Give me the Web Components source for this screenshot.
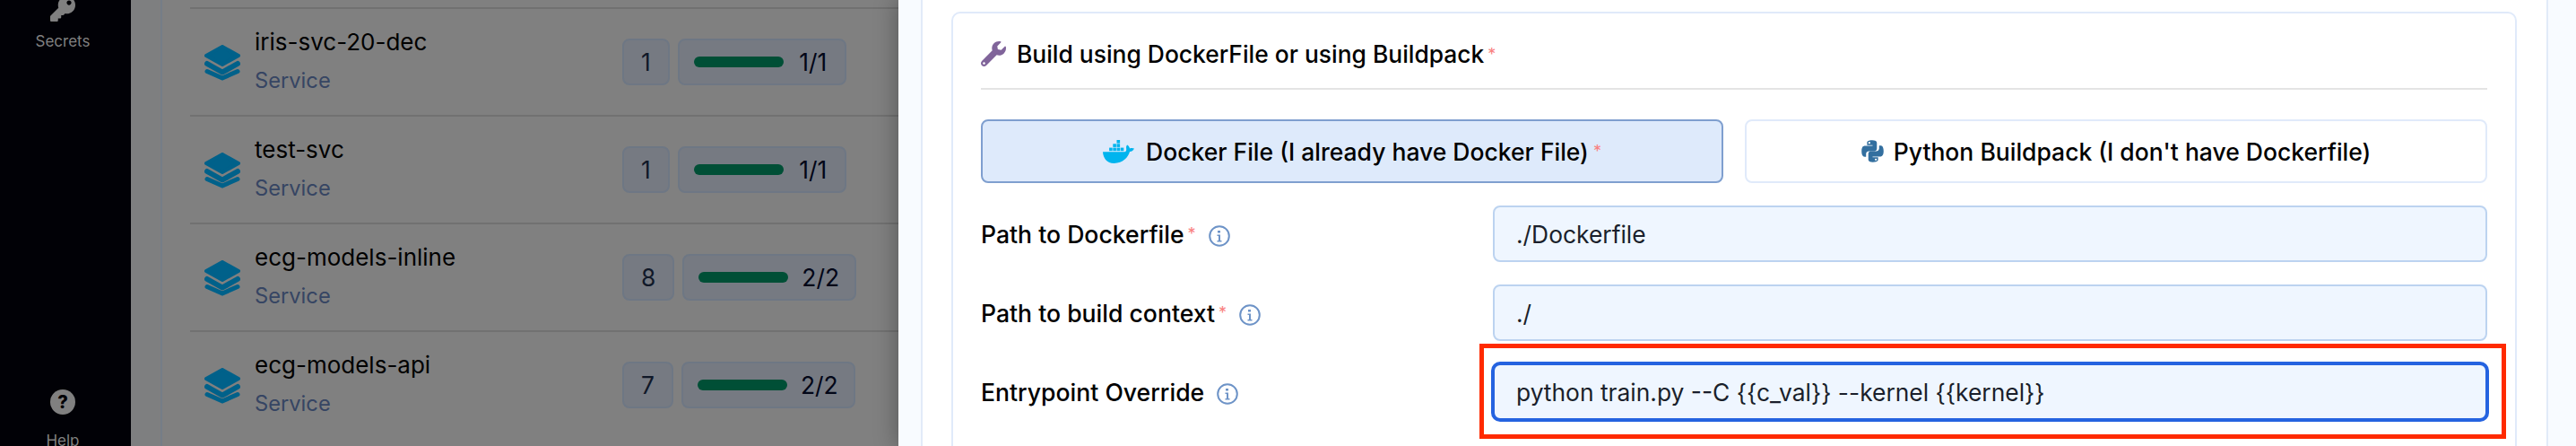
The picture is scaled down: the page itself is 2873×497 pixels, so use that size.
<!DOCTYPE html>
<html>
<head>
<meta charset="utf-8">
<style>
  html, body { margin: 0; height: 497px; overflow: hidden; background: #808080; }
  body { font-family: Inter, "Liberation Sans", sans-serif; }
</style>
</head>
<body>
<app-shell>
  <side-nav slot="nav"></side-nav>
  <service-list slot="list">
    <service-row name="iris-svc-20-dec" count="1" ready="1/1"></service-row>
    <service-row name="test-svc" count="1" ready="1/1"></service-row>
    <service-row name="ecg-models-inline" count="8" ready="2/2"></service-row>
    <service-row name="ecg-models-api" count="7" ready="2/2"></service-row>
  </service-list>
  <drawer-panel slot="drawer">
    <build-card>
      <option-tabs slot="tabs"></option-tabs>
      <form-row label="Path to Dockerfile" value="./Dockerfile" required></form-row>
      <form-row label="Path to build context" value="./" required></form-row>
      <form-row label="Entrypoint Override" value="python train.py --C {{c_val}} --kernel {{kernel}}" focused></form-row>
    </build-card>
  </drawer-panel>
</app-shell>

<script>
class AppShell extends HTMLElement {
  constructor() {
    super();
    this.attachShadow({ mode: "open" });
    this.shadowRoot.innerHTML = `
      <style>
        :host { display: flex; width: 2873px; height: 497px; overflow: hidden; }
        #main { position: relative; z-index: 0; display: flex; width: 856px; flex: none; background: #808080; }
        #strip { width: 33px; flex: none; background: #7e7f80; border-right: 2px solid #757d87; box-sizing: content-box; margin-right: -2px; }
      </style>
      <slot name="nav"></slot>
      <div id="main">
        <div id="strip"></div>
        <slot name="list"></slot>
      </div>
      <slot name="drawer"></slot>
    `;
  }
}

class SideNav extends HTMLElement {
  constructor() {
    super();
    this.attachShadow({ mode: "open" });
    this.shadowRoot.innerHTML = `
      <style>
        :host { display: flex; flex-direction: column; align-items: center; width: 146px; box-sizing: border-box; padding-right: 6px; flex: none; height: 497px; background: #010106; color: #808080; font-size: 17px; overflow: hidden; }
        .key { width: 28px; height: 28px; margin-top: -4px; fill: #808080; }
        .label { margin-top: 11px; line-height: 22px; }
        .help { width: 28px; height: 28px; border-radius: 50%; background: #808080; color: #010106; font-weight: 800; font-size: 20px; line-height: 28px; text-align: center; margin-top: auto; }
        .help + .label { margin-top: 18px; margin-bottom: -5px; }
      </style>
      <svg class="key" viewBox="0 0 512 512"><path d="M512 176.001C512 273.203 433.202 352 336 352c-11.22 0-22.19-1.062-32.827-3.069l-24.012 27.014A23.999 23.999 0 0 1 261.223 384H224v40c0 13.255-10.745 24-24 24h-40v40c0 13.255-10.745 24-24 24H24c-13.255 0-24-10.745-24-24v-78.059c0-6.365 2.529-12.47 7.029-16.971l161.802-161.802C163.108 213.814 160 195.271 160 176 160 78.798 238.797.001 335.999 0 433.488-.001 512 78.511 512 176.001zM336 128c0 26.51 21.49 48 48 48s48-21.49 48-48-21.49-48-48-48-48 21.49-48 48z"/></svg>
      <div class="label">Secrets</div>
      <div class="help">?</div>
      <div class="label">Help</div>
    `;
  }
}

class ServiceList extends HTMLElement {
  constructor() {
    super();
    this.attachShadow({ mode: "open" });
    this.shadowRoot.innerHTML = `
      <style>
        :host { display: block; flex: 1; padding: 8px 0 0 33px; }
      </style>
      <slot></slot>
    `;
  }
}

class ServiceRow extends HTMLElement {
  connectedCallback() {
    const name = this.getAttribute("name");
    const count = this.getAttribute("count");
    const ready = this.getAttribute("ready");
    this.attachShadow({ mode: "open" });
    this.shadowRoot.innerHTML = `
      <style>
        :host { display: flex; align-items: center; height: 120px; box-sizing: border-box; border-top: 2px solid #717171; padding-left: 16px; }
        svg { width: 40px; height: 40px; flex: none; margin-right: 16px; margin-top: 2px; }
        .text { width: 410px; flex: none; margin-top: -5px; }
        .name { font-size: 26px; line-height: 32px; color: #000; }
        .kind { font-size: 23.7px; line-height: 24px; color: #364563; margin-top: 15px; }
        .box { display: flex; align-items: center; height: 52px; box-sizing: border-box; background: #767a82; border: 2px solid #6e7784; border-radius: 8px; padding: 0 19px; font-size: 26.4px; color: #101828; margin-right: 9px; }
        .box.pods { padding: 0 17px 0 16px; }
        .bar { width: 100px; height: 12px; border-radius: 6px; background: #004f36; margin-right: 15px; }
        .ready { color: #020617; min-width: 36px; text-align: center; }
      </style>
      <svg viewBox="0 0 40 40">
        <path d="M20 2 L38 12 L20 22 L2 12 Z" fill="#00618a" stroke="#00618a" stroke-width="4" stroke-linejoin="round"/>
        <path d="M3 21 L20 30.5 L37 21" fill="none" stroke="#00618a" stroke-width="6" stroke-linecap="round" stroke-linejoin="round"/>
        <path d="M3 29.5 L20 37 L37 29.5" fill="none" stroke="#00618a" stroke-width="5" stroke-linecap="round" stroke-linejoin="round"/>
      </svg>
      <div class="text">
        <div class="name">${name}</div>
        <div class="kind">Service</div>
      </div>
      <div class="box">${count}</div>
      <div class="box pods"><div class="bar"></div><span class="ready">${ready}</span></div>
    `;
  }
}

class DrawerPanel extends HTMLElement {
  constructor() {
    super();
    this.attachShadow({ mode: "open" });
    this.shadowRoot.innerHTML = `
      <style>
        :host { display: block; position: relative; z-index: 1; flex: 1; background: #f8fbff; box-shadow: 0 0 24px 2px rgba(0,0,0,.3); padding: 0 31px 0 25px; min-width: 0; }
        #inner { background: #fff; height: 497px; box-sizing: border-box; border-left: 2px solid #e2ebf9; border-right: 2px solid #e2ebf9; padding: 13px 33px 0 32px; }
      </style>
      <div id="inner"><slot></slot></div>
    `;
  }
}

class BuildCard extends HTMLElement {
  constructor() {
    super();
    this.attachShadow({ mode: "open" });
    this.shadowRoot.innerHTML = `
      <style>
        :host { display: block; background: #fff; border: 2px solid #e0eafa; border-radius: 10px; padding: 30px 31px 40px; }
        h3 { display: flex; align-items: center; margin: 0; height: 30px; font-size: 26.4px; font-weight: 450; color: #000; font-family: inherit; }
        svg { width: 28px; height: 28px; fill: #80649a; margin-right: 12px; }
        .req { color: #f98080; font-size: 18px; font-weight: 400; margin-left: 4px; }
        hr { border: 0; height: 2px; background: #e4e4e4; margin: 23px 0 33px; }
        .fields { display: flex; flex-direction: column; gap: 25px; }
      </style>
      <h3>
        <svg viewBox="0 0 512 512"><path d="M507.73 109.1c-2.24-9.03-13.54-12.09-20.12-5.51l-74.36 74.36-67.88-11.31-11.31-67.88 74.36-74.36c6.62-6.62 3.43-17.9-5.66-20.16-47.38-11.74-99.55.91-136.58 37.93-39.64 39.64-50.55 97.1-34.05 147.2L18.74 402.76c-24.99 24.99-24.99 65.51 0 90.5 24.99 24.99 65.51 24.99 90.5 0l213.21-213.21c50.12 16.71 107.47 5.68 147.37-34.22 37.07-37.07 49.7-89.32 37.91-136.73zM64 472c-13.25 0-24-10.75-24-24 0-13.26 10.75-24 24-24s24 10.74 24 24c0 13.25-10.75 24-24 24z"/></svg>
        Build using DockerFile or using Buildpack<span class="req">*</span>
      </h3>
      <hr>
      <slot name="tabs"></slot>
      <div class="fields"><slot></slot></div>
    `;
  }
}

class OptionTabs extends HTMLElement {
  constructor() {
    super();
    this.attachShadow({ mode: "open" });
    this.shadowRoot.innerHTML = `
      <style>
        :host { display: grid; grid-template-columns: 1fr 1fr; gap: 24px; margin-bottom: 25px; }
        .opt { display: flex; align-items: center; justify-content: center; height: 71px; box-sizing: border-box; border: 2px solid #e0eafa; border-radius: 8px; background: #fff; font-size: 26.5px; font-weight: 450; color: #000; }
        .opt.on { background: #deeafb; border-color: #7f9fcf; }
        .whale { width: 35px; height: 26px; margin-right: 13px; }
        .py { width: 25px; height: 25px; margin-right: 11px; }
        .req { color: #f98080; font-size: 18px; font-weight: 400; margin-left: 5px; }
      </style>
      <div class="opt on">
        <svg class="whale" viewBox="0 0 35 26" fill="#00b4ee">
          <rect x="15.5" y="0" width="3.6" height="3.6"/>
          <rect x="11.3" y="4.3" width="3.6" height="3.6"/><rect x="15.5" y="4.3" width="3.6" height="3.6"/>
          <rect x="7.1" y="8.6" width="3.6" height="3.6"/><rect x="11.3" y="8.6" width="3.6" height="3.6"/><rect x="15.5" y="8.6" width="3.6" height="3.6"/><rect x="19.7" y="8.6" width="3.6" height="3.6"/>
          <path d="M0 13.2H24.5c1.5 0 2-2 1.6-4.2-.3-1.6.3-3 1.2-3.6 1.4 1 2.4 2.4 2.7 4 1.7-.7 3.6-.6 5 .2-.8 2-2.6 3.3-5 3.5C28 19.500 22.500 26 12.500 26 4.500 26 .3 20 0 13.200Z"/>
        </svg>
        Docker File (I already have Docker File)<span class="req">*</span>
      </div>
      <div class="opt">
        <svg class="py" viewBox="0 0 110 110" fill="#336f9f" fill-rule="evenodd">
          <path d="M54 1C26 1 28 13 28 13v12h27v4H17S1 27 1 55s14 27 14 27h8V69s0-14 14-14h26s13 0 13-13V15S78 1 54 1zM39 9a5 5 0 1 1 0 10 5 5 0 0 1 0-10z"/>
          <path transform="rotate(180 55 55)" d="M54 1C26 1 28 13 28 13v12h27v4H17S1 27 1 55s14 27 14 27h8V69s0-14 14-14h26s13 0 13-13V15S78 1 54 1zM39 9a5 5 0 1 1 0 10 5 5 0 0 1 0-10z"/>
        </svg>
        Python Buildpack (I don't have Dockerfile)
      </div>
    `;
  }
}

class FormRow extends HTMLElement {
  connectedCallback() {
    const label = this.getAttribute("label");
    const value = this.getAttribute("value");
    const req = this.hasAttribute("required");
    const focused = this.hasAttribute("focused");
    this.attachShadow({ mode: "open" });
    this.shadowRoot.innerHTML = `
      <style>
        :host { display: grid; grid-template-columns: 571px 1fr; align-items: center; }
        .label { display: flex; align-items: center; font-size: 26.6px; font-weight: 450; color: #000; }
        .req { color: #f98080; font-size: 18px; font-weight: 400; margin-left: 4px; }
        svg { width: 24px; height: 24px; margin-left: 14px; margin-top: 4px; flex: none; }
        .input { position: relative; height: 63px; box-sizing: border-box; display: flex; align-items: center; padding: 0 24px; background: #eff6ff; border: 2px solid #bcd3f0; border-radius: 8px; font-size: 26.4px; color: #1a1f2b; white-space: nowrap; }
        .input.focused { border-color: #2563e0; box-shadow: 0 0 0 2px #2563e0; }
        /* red annotation box lies over the row */
        .mark { position: absolute; top: -24px; left: -17px; right: -23px; bottom: -23px; border: 5px solid #ff2a00; }
      </style>
      <div class="label">${label}${req ? '<span class="req">*</span>' : ""}
        <svg viewBox="0 0 24 24"><circle cx="12" cy="12" r="10.800" fill="none" stroke="#6d93c7" stroke-width="2"/><path fill="#6d93c7" d="M10 6h3v2.500h-3zM9.500 10.500h3.500v6.500h1.500v1.500h-5v-1.500h1.500v-5h-1.500z"/></svg>
      </div>
      <div class="input ${focused ? "focused" : ""}">${value}${focused ? '<div class="mark"></div>' : ""}</div>
    `;
  }
}

customElements.define("app-shell", AppShell);
customElements.define("side-nav", SideNav);
customElements.define("service-list", ServiceList);
customElements.define("service-row", ServiceRow);
customElements.define("drawer-panel", DrawerPanel);
customElements.define("build-card", BuildCard);
customElements.define("option-tabs", OptionTabs);
customElements.define("form-row", FormRow);
</script>
</body>
</html>
